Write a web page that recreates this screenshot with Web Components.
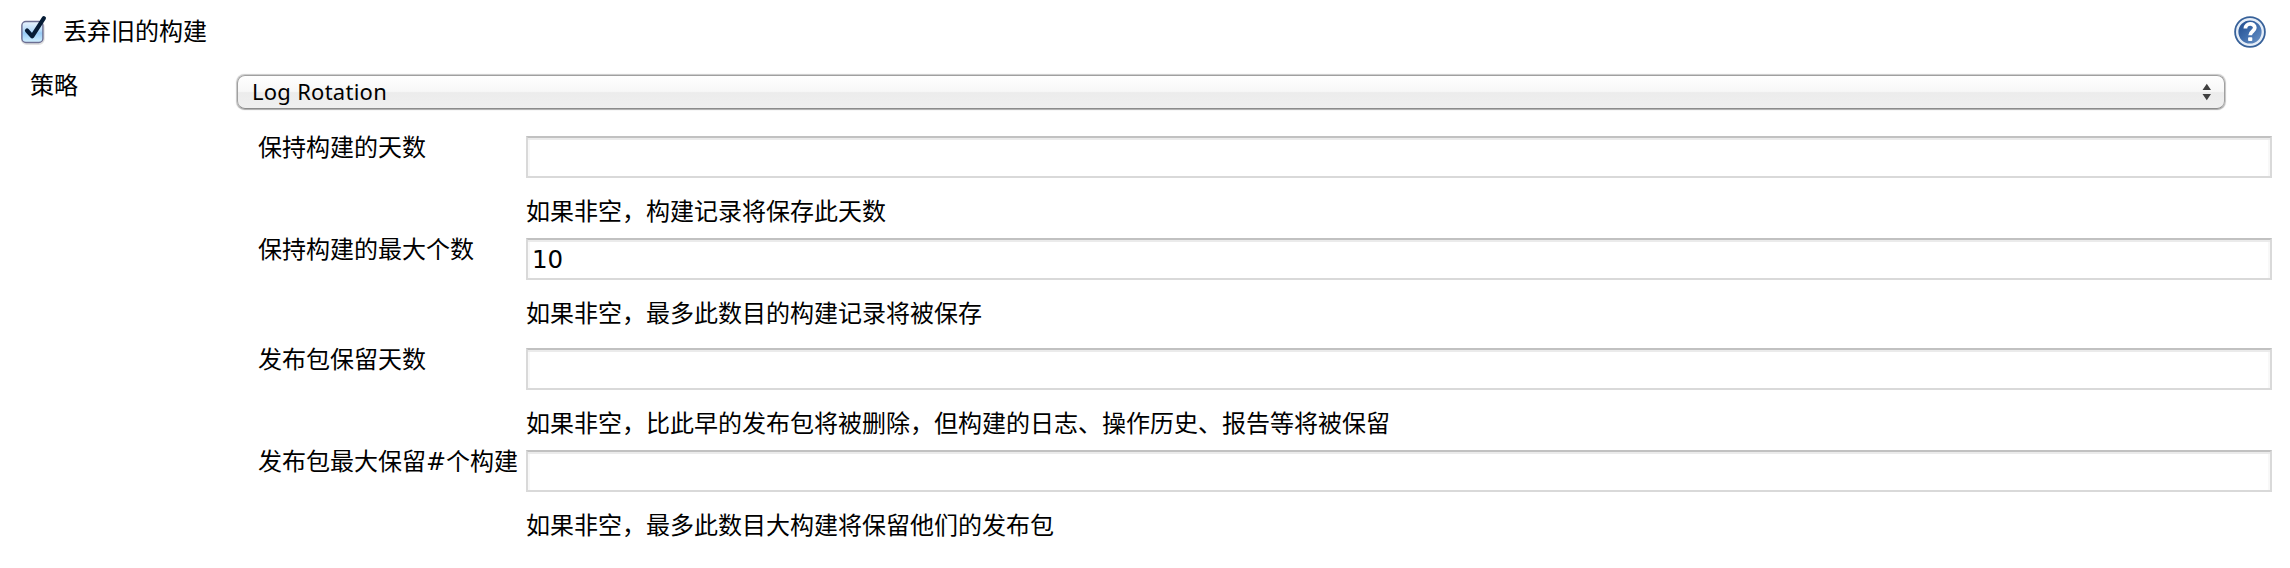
<!DOCTYPE html>
<html lang="zh-CN">
<head>
<meta charset="utf-8">
<title>丢弃旧的构建</title>
<style>
body { margin: 0; background: #fff; color: #000; }
</style>
</head>
<body>
<build-discarder></build-discarder>
<script>
const define = (name, html) => {
  const template = document.createElement('template');
  template.innerHTML = html;
  customElements.define(name, class extends HTMLElement {
    constructor() {
      super();
      this.attachShadow({ mode: 'open' }).append(template.content.cloneNode(true));
    }
  });
};

define('check-box', `
<style>:host{display:block;width:32px;height:34px} svg{display:block}</style>
<svg width="32" height="34" viewBox="0 0 32 34">
  <defs><linearGradient id="g" x1="0" y1="0" x2="0" y2="1">
    <stop offset="0" stop-color="#eaf4fd"/><stop offset=".45" stop-color="#b4d9f8"/>
    <stop offset=".55" stop-color="#97cbf6"/><stop offset="1" stop-color="#d3f1ff"/>
  </linearGradient></defs>
  <rect x="0.8" y="7" width="22" height="22" rx="5" fill="none" stroke="#000" stroke-opacity=".12" stroke-width="2"/>
  <rect x="0.9" y="6.5" width="21" height="21" rx="4" fill="url(#g)" stroke="#6c6f93" stroke-width="1.4"/>
  <path d="M6 15.5L11.2 21.3L22.9 3.2" fill="none" stroke="#061c36" stroke-width="4.2" stroke-linecap="round" stroke-linejoin="round"/>
</svg>`);

define('help-button', `
<style>:host{display:block;width:32px;height:32px} svg{display:block}</style>
<svg width="32" height="32" viewBox="0 0 32 32">
  <defs><linearGradient id="h" x1="0" y1="0" x2="1" y2="1">
    <stop offset="0" stop-color="#1d4788"/><stop offset=".5" stop-color="#3f6dac"/><stop offset="1" stop-color="#7299ca"/>
  </linearGradient></defs>
  <circle cx="16" cy="16" r="15.8" fill="#376199"/>
  <circle cx="16" cy="16" r="12.8" fill="url(#h)" stroke="#e6eef8" stroke-width="2.4"/>
  <path d="M11.4 12.5C11.4 6.5 20.8 6.6 20.8 11.8C20.8 15.2 16.2 15.3 16.2 19.2" fill="none" stroke="#fff" stroke-width="3.8"/>
  <rect x="14.1" y="21.3" width="4.2" height="3.8" rx=".8" fill="#fff"/>
</svg>`);

define('select-menu', `
<style>
:host{display:flex;align-items:center;justify-content:space-between;box-sizing:border-box;height:34px;
  border:1.5px solid #a0a0a0;border-bottom-color:#8b8b8b;border-radius:8px;
  background:linear-gradient(#fff 0,#f7f7f7 48%,#ececec 52%,#efefef 100%);
  box-shadow:0 0 1px 0.5px rgba(0,0,0,.22),0 1px 1px rgba(0,0,0,.14);padding:0 13px 0 14px;
  font:22px/30px "Noto Sans",sans-serif;letter-spacing:.26px}
span{margin-top:-2px}
svg{display:block}
</style>
<span><slot></slot></span>
<svg width="10" height="18" viewBox="0 0 10 18"><path d="M1.5 7L5.8 .8L10 7ZM1.5 11L5.8 17.2L10 11Z" fill="#404040"/></svg>`);

define('text-box', `
<style>
:host{display:block;box-sizing:border-box;height:42px;border:2px solid #d9d9d9;border-top-color:#c1c1c1;
  box-shadow:inset 0 2px 0 #ebebeb,inset 2px 0 1px #f8f8f8,inset -2px 0 1px #f8f8f8;
  padding-left:4px;font:24.5px/39px "DejaVu Sans",sans-serif}
</style><slot></slot>`);

define('form-entry', `
<style>
:host{display:grid;grid-template-columns:268px 1fr;height:102px;
  font:24px/24px "Noto Sans CJK SC",sans-serif}
.label{margin-top:-2px;white-space:nowrap}
.help{padding-top:20px;white-space:nowrap}
</style>
<div class="label"><slot name="label"></slot></div>
<div><slot></slot><div class="help"><slot name="help"></slot></div></div>`);

define('build-discarder', `
<style>
:host{display:block;height:568px;font:24px/24px "Noto Sans CJK SC",sans-serif;overflow:hidden}
.head{display:flex;align-items:flex-start;padding:15px 24px 0 21px;height:45px;box-sizing:content-box}
.title{margin:3px auto 0 10px}
help-button{margin-top:1px}
.strategy{display:grid;grid-template-columns:207px 1988px;padding-left:30px;height:61px}
.name{padding-top:12px}
select-menu{margin-top:15px}
.entries{padding:0 18px 0 258px;display:flex;flex-direction:column;margin-top:15px}
.gap{margin-top:8px}
.hash{font-family:"DejaVu Sans",sans-serif;font-weight:400;line-height:1px}
</style>
<div class="head"><check-box></check-box><span class="title">丢弃旧的构建</span><help-button></help-button></div>
<div class="strategy"><span class="name">策略</span><select-menu>Log Rotation</select-menu></div>
<div class="entries">
  <form-entry><span slot="label">保持构建的天数</span><text-box></text-box><span slot="help">如果非空，构建记录将保存此天数</span></form-entry>
  <form-entry><span slot="label">保持构建的最大个数</span><text-box>10</text-box><span slot="help">如果非空，最多此数目的构建记录将被保存</span></form-entry>
  <form-entry class="gap"><span slot="label">发布包保留天数</span><text-box></text-box><span slot="help">如果非空，比此早的发布包将被删除，但构建的日志、操作历史、报告等将被保留</span></form-entry>
  <form-entry><span slot="label">发布包最大保留<span class="hash">#</span>个构建</span><text-box></text-box><span slot="help">如果非空，最多此数目大构建将保留他们的发布包</span></form-entry>
</div>`);
</script>
</body>
</html>
